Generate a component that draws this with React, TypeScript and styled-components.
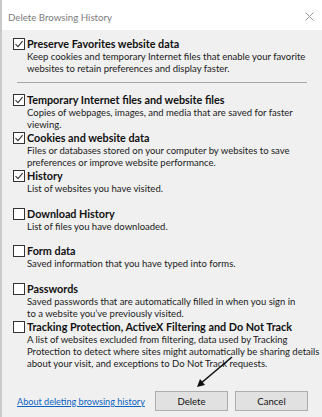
import React from "react";
import styled, { createGlobalStyle } from "styled-components";

const Global = createGlobalStyle`
  html, body { margin: 0; padding: 0; background: #f0f0f0; }
  body { font-family: "Lato", "Noto Sans", sans-serif; }
`;

const Window = styled.div`
  width: 322px;
  height: 417px;
  display: flex;
  flex-direction: column;
  border-left: 2px solid #c9c9c9;
  box-sizing: border-box;
  background: #f0f0f0;
  overflow: hidden;
`;

const TitleBar = styled.div`
  height: 30px;
  flex: none;
  background: #ffffff;
  display: flex;
  align-items: center;
  justify-content: space-between;
  padding: 0 8px 0 6px;
  box-sizing: border-box;
`;

const Title = styled.span`
  font-size: 9.7px;
  color: #7b7b7b;
  padding-top: 4px;
`;

const CloseIcon = styled.svg`
  width: 9px;
  height: 9px;
  margin-top: 3px;
`;

const Body = styled.div`
  flex: 1;
  display: flex;
  flex-direction: column;
  padding: 7px 0 0 11px;
`;

const Item = styled.div<{ $h?: number }>`
  display: grid;
  grid-template-columns: 12px 1fr;
  column-gap: 2px;
  align-items: start;
  align-content: start;
  min-height: ${(p) => p.$h ?? 37.7}px;
  box-sizing: border-box;
  padding-right: 2px;
`;

const Box = styled.div`
  width: 12px;
  height: 12px;
  box-sizing: border-box;
  border: 1px solid #333333;
  background: #ffffff;
  margin-top: 1px;
  display: flex;
  align-items: center;
  justify-content: center;
`;

const Label = styled.div`
  font-weight: 700;
  font-size: 10.8px;
  line-height: 13px;
  color: #111;
  grid-column: 2;
`;

const Desc = styled.div<{ $w?: number }>`
  grid-column: 2;
  font-size: 9.5px;
  line-height: 12px;
  color: #1a1a1a;
  padding-top: 1px;
  max-width: ${(p) => (p.$w ? `${p.$w}px` : "none")};
`;

const Separator = styled.div`
  height: 1px;
  background: #a8a8a8;
  margin: 7px 15px 10px 4px;
`;

const Footer = styled.div`
  margin-top: auto;
  height: 20px;
  flex: none;
  display: flex;
  align-items: center;
  padding: 0 14px 6px 4px;
  gap: 7px;
  position: relative;
`;

const Link = styled.a`
  font-size: 9.1px;
  color: #0a62c2;
  text-decoration: underline;
  white-space: nowrap;
  margin-right: auto;
  cursor: pointer;
`;

const Button = styled.button`
  width: 73px;
  height: 20px;
  flex: none;
  border: 1px solid #adadad;
  background: #e1e1e1;
  font-family: "Lato", "Noto Sans", sans-serif;
  font-size: 9.6px;
  color: #111;
  padding: 0;
`;

const Arrow = styled.svg`
  position: absolute;
  left: 181px;
  top: -35px;
  width: 40px;
  height: 34px;
  pointer-events: none;
`;

const Check = () => (
  <svg width="10" height="10" viewBox="0 0 10 10">
    <path d="M1.5 5.2 L4 7.6 L8.6 2.2" fill="none" stroke="#333" strokeWidth="1.1" />
  </svg>
);

type Entry = { label: string; desc: string; checked: boolean; w?: number };

const entries: Entry[] = [
  {
    label: "Temporary Internet files and website files",
    desc: "Copies of webpages, images, and media that are saved for faster viewing.",
    checked: true,
  },
  {
    label: "Cookies and website data",
    desc: "Files or databases stored on your computer by websites to save preferences or improve website performance.",
    checked: true,
  },
  { label: "History", desc: "List of websites you have visited.", checked: true },
  { label: "Download History", desc: "List of files you have downloaded.", checked: false },
  { label: "Form data", desc: "Saved information that you have typed into forms.", checked: false },
  {
    label: "Passwords",
    desc: "Saved passwords that are automatically filled in when you sign in to a website you\u2019ve previously visited.",
    checked: false,
    w: 276,
  },
  {
    label: "Tracking Protection, ActiveX Filtering and Do Not Track",
    desc: "A list of websites excluded from filtering, data used by Tracking Protection to detect where sites might automatically be sharing details about your visit, and exceptions to Do Not Track requests.",
    checked: false,
  },
];

const Row = ({ e, h }: { e: Entry; h?: number }) => (
  <Item $h={h}>
    <Box>{e.checked && <Check />}</Box>
    <Label>{e.label}</Label>
    <Desc $w={e.w}>{e.desc}</Desc>
  </Item>
);

export default function App() {
  return (
    <>
      <Global />
      <Window>
        <TitleBar>
          <Title>Delete Browsing History</Title>
          <CloseIcon viewBox="0 0 9 9">
            <path d="M0.5 0.5 L8.5 8.5 M8.5 0.5 L0.5 8.5" stroke="#9a9a9a" strokeWidth="1" />
          </CloseIcon>
        </TitleBar>
        <Body>
          <Row
            h={0}
            e={{
              label: "Preserve Favorites website data",
              desc: "Keep cookies and temporary Internet files that enable your favorite websites to retain preferences and display faster.",
              checked: true,
            }}
          />
          <Separator />
          {entries.map((e) => (
            <Row key={e.label} e={e} />
          ))}
          <Footer>
            <Link>About deleting browsing history</Link>
            <Button>Delete</Button>
            <Button>Cancel</Button>
            <Arrow viewBox="0 0 40 34">
              <path d="M38 1 L6 28" stroke="#111" strokeWidth="1.6" />
              <path d="M3 31 L6 23 L11 29 Z" fill="#111" />
            </Arrow>
          </Footer>
        </Body>
      </Window>
    </>
  );
}
